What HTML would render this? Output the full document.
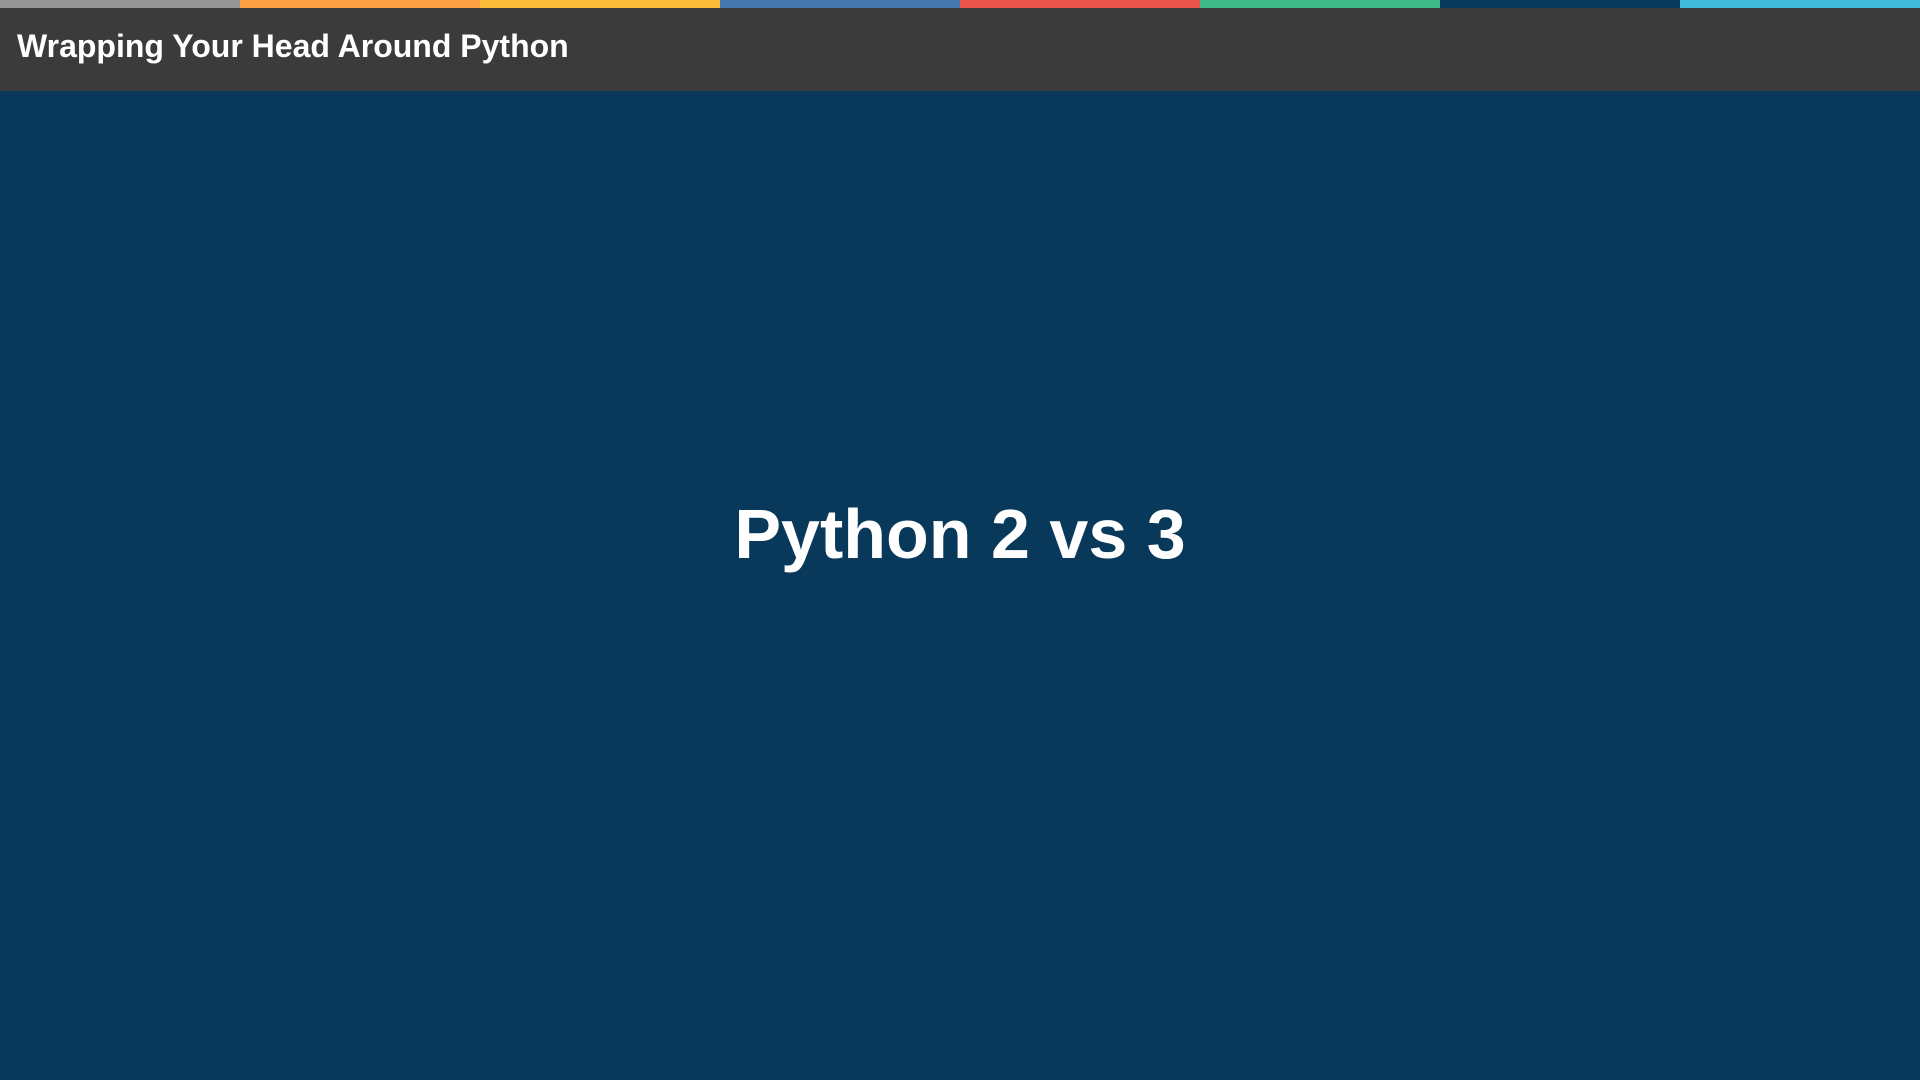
<!DOCTYPE html>
<html><head><style>
html,body{margin:0;padding:0;width:1920px;height:1080px;overflow:hidden;background:#08395b;font-family:"Liberation Sans",Arial,sans-serif}
.bar{display:flex;height:8px}
.bar div{flex:1}
.hdr{position:absolute;top:8px;left:0;width:1920px;height:83px;background:#3b3b3b}
.hdr span{position:absolute;left:17px;top:22px;color:#fff;font-weight:bold;font-size:32px;line-height:1}
.main{position:absolute;top:499px;left:0;width:1920px;text-align:center;color:#fff;font-weight:bold;font-size:70px;line-height:1}
</style></head><body>
<div class="bar"><div style="background:#959595"></div><div style="background:#fba043"></div><div style="background:#f9bc3b"></div><div style="background:#4778b0"></div><div style="background:#e9554b"></div><div style="background:#3fb98a"></div><div style="background:#0a3a5c"></div><div style="background:#41bcd9"></div></div>
<div class="hdr"><span>Wrapping Your Head Around Python</span></div>
<div class="main">Python 2 vs 3</div>
</body></html>
